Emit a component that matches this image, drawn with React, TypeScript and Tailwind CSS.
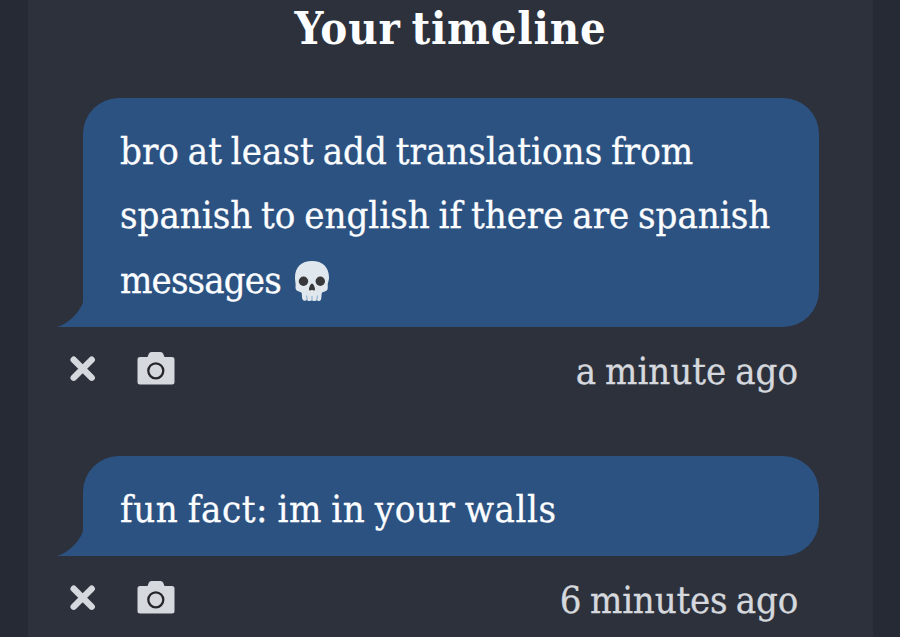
import type { ReactNode } from 'react';

function Skull() {
    return (
        <svg viewBox="0 0 36 42" className="ml-[13px] inline-block h-[42px] w-[36px] align-[-9px]">
            <path
                d="M18 1C7.500 1 1 7 1 17.500c0 3.500.7 5.200.6 7.500-.1 2-.4 4 .9 5.300 1.300 1.500 3.500 1.200 4.800 2.200 1 .9.200 4.500 1.300 7 1 1.700 3.200 1.500 4.200.3.900 1.600 3.900 1.600 4.900.1 1.100 1.500 4 1.500 4.900.1 1 1.200 3.500 1.400 4.300-.3.900-2 .3-6.200 1.300-7.200 1.500-1 3.600-.7 4.800-2.200 1.200-1.500.7-3.300.7-5.300 0-2.300 1.300-4 1.300-7.500C35 7 28.500 1 18 1z"
                fill="#e0e7ed"
            />
            <circle cx="9.500" cy="21.300" r="4.700" fill="#38383b" />
            <circle cx="26.300" cy="21.300" r="4.700" fill="#38383b" />
            <path d="M18 23.500c-1.500 0-3.200 4.500-3 6 .2 1.500 2.200.9 3 .3.800.6 2.800 1.200 3-.3.200-1.500-1.500-6-3-6z" fill="#38383b" />
            <path d="M12.500 35.500l.8 5M18 36v5M23.500 35.500l-.8 5" stroke="#86accc" strokeWidth="1" />
        </svg>
    );
}

function CloseIcon() {
    return (
        <svg viewBox="0 0 26 26" className="h-[26px] w-[26px]">
            <path d="M3.700 3.700l18 18M21.700 3.700l-18 18" stroke="currentColor" strokeWidth="6.400" strokeLinecap="round" />
        </svg>
    );
}

function CameraIcon() {
    return (
        <svg viewBox="0 0 38 33" className="h-[33px] w-[38px]">
            <path
                d="M3 5h7.500l1.300-3.200Q12.500 0 14.500 0h9q2 0 2.700 1.800L27.500 5H35Q37.500 5 37.500 7.500V30q0 2.500-2.500 2.500H3Q.5 32.500.5 30V7.500Q.5 5 3 5z"
                fill="currentColor"
            />
            <circle cx="18.800" cy="18.800" r="7.500" fill="none" stroke="#24262b" strokeWidth="2.300" />
        </svg>
    );
}

function Message({ children, time }: { children: ReactNode; time: ReactNode }) {
    return (
        <article className="h-[358px] [word-spacing:-2px]">
            <div className="relative ml-[55px] w-[736px] rounded-[36px] rounded-bl-none bg-[#2c5282] pt-[21px] pb-[15px] pl-[37px] text-[38px] leading-[64.300px] text-[#fcfdff]">
                <svg viewBox="0 0 27 28" className="absolute bottom-0 -left-[26px] h-[28px] w-[27px]">
                    <path d="M27 0h-1v3C24 11 12 25 0 28h27z" fill="#2c5282" />
                </svg>
                {children}
            </div>
            <div className="flex items-start pt-[25px] pr-[75px] pl-[42px] text-[#d5d8dd]">
                <button className="mt-[4px]"><CloseIcon /></button>
                <button className="ml-[41px]"><CameraIcon /></button>
                <div className="ml-auto -mt-[6px] text-[38px] leading-[50px] whitespace-nowrap">{time}</div>
            </div>
        </article>
    );
}

export default function App() {
    return (
        <div className="h-[637px] overflow-hidden bg-[#252a34] font-['DejaVu_Serif_Condensed','DejaVu_Serif',serif] [font-stretch:condensed] [-webkit-text-stroke:0.3px_currentColor]">
            <main className="ml-[28px] h-full w-[845px] bg-[#2d313c]">
                <h1 className="h-[98px] pt-[3px] text-center text-[45px] leading-[52px] font-bold whitespace-nowrap text-[#fcfdff] [-webkit-text-stroke:0px]">
                    <span className="tracking-[0.800px] [word-spacing:-4px]">Your timeline</span>
                </h1>
                <Message time={<span>a minute ago</span>}>
                    <p className="whitespace-nowrap">
                        <span className="tracking-[0.030px]">bro at least add translations from</span><br />
                        <span className="tracking-[-0.010px]">spanish to english if there are spanish</span><br />
                        <span className="tracking-[-0.850px]">messages</span><Skull />
                    </p>
                </Message>
                <Message time={<span className="tracking-[-0.230px]">6 minutes ago</span>}>
                    <p className="tracking-[0.560px] whitespace-nowrap">fun fact: im in your walls</p>
                </Message>
            </main>
        </div>
    );
}
